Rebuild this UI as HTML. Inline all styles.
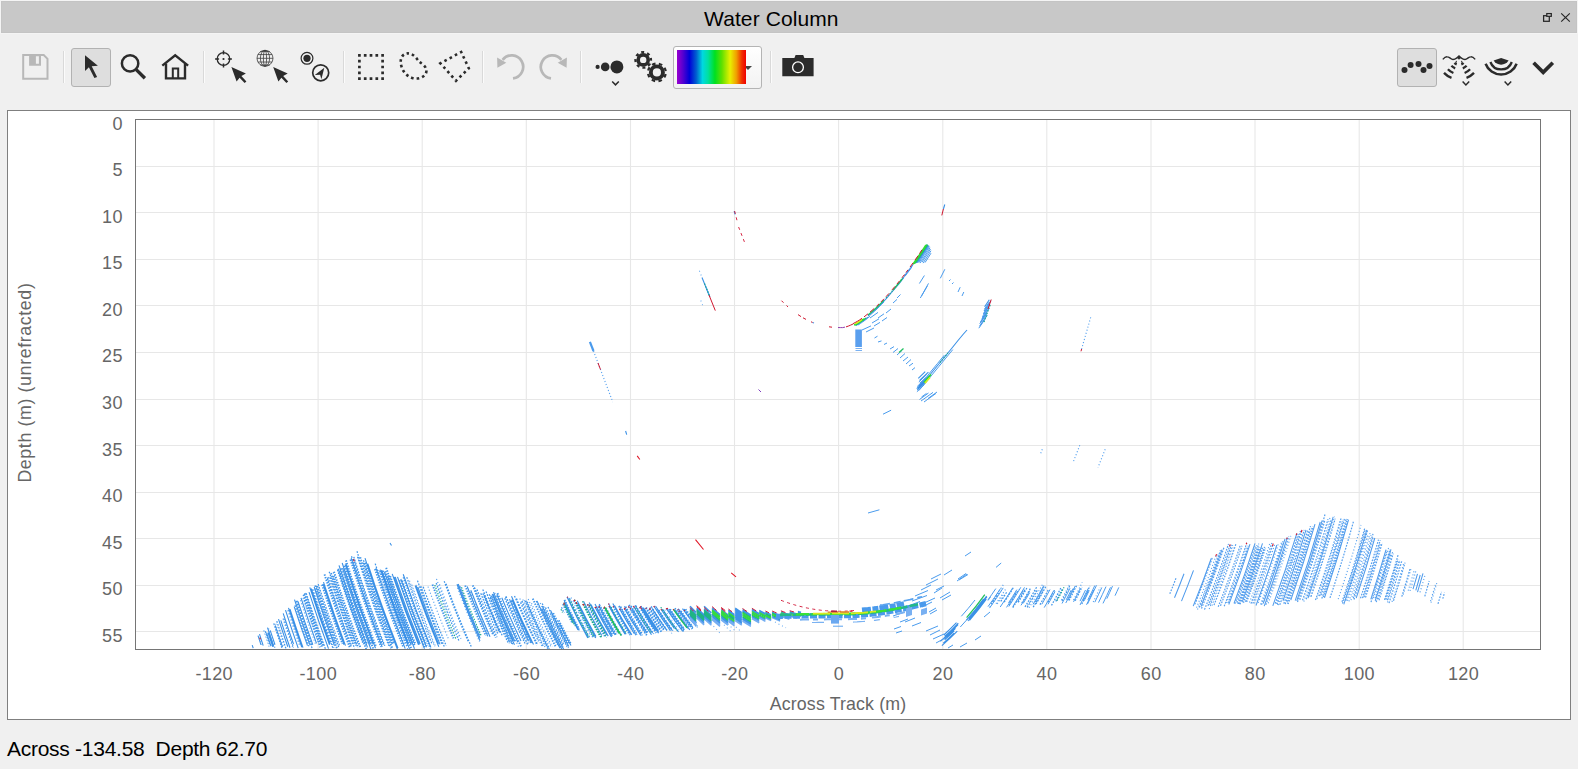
<!DOCTYPE html>
<html lang="en">
<head>
<meta charset="utf-8">
<title>Water Column</title>
<style>
html,body{margin:0;padding:0;}
body{width:1578px;height:769px;overflow:hidden;background:#f0f0f0;font-family:"Liberation Sans",sans-serif;position:relative;}
.titlebar{position:absolute;left:1px;top:1px;width:1576px;height:32px;background:#c8c8c8;box-sizing:border-box;border:1px solid #c4c4c4;box-shadow:0 0 0 1px #f4f4f4;}
.titlebar .title{position:absolute;left:702px;top:0px;height:32px;line-height:33px;font-size:21px;color:#000;letter-spacing:0.1px;white-space:nowrap;}
.titlebar svg{position:absolute;left:0;top:0;}
.toolbar{position:absolute;left:0;top:34px;width:1578px;height:70px;}
.toolbar svg{position:absolute;left:0;top:0;}
.btn-on{position:absolute;box-sizing:border-box;border:1px solid #b2b2b2;background:#dedede;border-radius:3px;}
.sep{position:absolute;width:1px;background:#d9d9d9;top:17px;height:32px;box-shadow:1px 0 0 #fbfbfb;}
.combo{position:absolute;left:673px;top:12px;width:89px;height:43px;box-sizing:border-box;border:1px solid #b4b4b4;border-radius:3px;background:linear-gradient(#ffffff,#f2f2f2);}
.combo .ramp{position:absolute;z-index:2;left:3px;top:3px;width:69px;height:34px;background:linear-gradient(90deg,#9a00d0 0%,#5a00d0 8%,#0000d8 18%,#0060d0 28%,#00d8e0 37%,#00e0a0 45%,#00e020 55%,#60e000 65%,#e8f000 77%,#f0a000 86%,#f03000 94%,#f00000 100%);}
.combo .arr{position:absolute;left:70px;top:18.5px;width:0;height:0;border-left:4px solid transparent;border-right:4px solid transparent;border-top:4px solid #444;}
.plot{position:absolute;left:7px;top:110px;width:1564px;height:610px;box-sizing:border-box;border:1px solid #7f7f7f;background:#fff;}
.plot svg{position:absolute;left:-8px;top:-111px;}
.status{position:absolute;left:7px;top:734.7px;font-size:21px;line-height:28px;color:#000;white-space:pre;letter-spacing:-0.27px;}
</style>
</head>
<body>
<div class="titlebar">
  <div class="title">Water Column</div>
</div>
<svg class="tbicons" style="position:absolute;left:0;top:0" width="1578" height="34" viewBox="0 0 1578 34">
  <g fill="none" stroke="#262626" stroke-width="1.25">
    <rect x="1543.6" y="15.7" width="5.7" height="5.6"/>
    <rect x="1546.8" y="13.6" width="4.5" height="2.7" fill="#dadada"/>
    <path d="M1561.2 13.4L1569.8 21.6M1569.8 13.4L1561.2 21.6" stroke-width="1.2"/>
  </g>
</svg>
<div class="toolbar">
  <div class="btn-on" style="left:71px;top:14px;width:40px;height:39px"></div>
  <div class="btn-on" style="left:1397px;top:14px;width:40px;height:39px"></div>
  <div class="sep" style="left:63px"></div>
  <div class="sep" style="left:203px"></div>
  <div class="sep" style="left:343px"></div>
  <div class="sep" style="left:482px"></div>
  <div class="sep" style="left:580px"></div>
  <div class="sep" style="left:770px"></div>
  <div class="combo"><div class="ramp"></div><div class="arr"></div></div>
  <svg width="1578" height="70" viewBox="0 34 1578 70">
    <!-- save (disabled) -->
    <g fill="none" stroke="#b8b8b8" stroke-width="2">
      <path d="M23.2 55H43.7L47.5 58.8V78.7H23.2Z"/>
      <path d="M29.1 55.4V65.7H41V55.4Z M35.9 56.2V63.7H38.9V56.2Z" fill="#b8b8b8" fill-rule="evenodd" stroke="none"/>
    </g>
    <!-- select arrow -->
    <path d="M85 55.2L85 70.9L88.9 67.3L94.4 78L97.1 77L91.7 66.2L97.9 65.7Z" fill="#2b2b2b"/>
    <!-- magnifier -->
    <g fill="none" stroke="#2b2b2b">
      <circle cx="130.1" cy="63.4" r="8.2" stroke-width="2.5"/>
      <path d="M136.2 69.6L144.9 78.2" stroke-width="3.4"/>
    </g>
    <!-- home -->
    <g fill="none" stroke="#2b2b2b" stroke-width="2.4">
      <path d="M162.3 65.6L175.2 55.4L188.1 65.6"/>
      <path d="M166 63.5V78.4H185V63.5"/>
      <path d="M172.8 78.4V68.6H178.2V78.4" stroke-width="2"/>
    </g>
    <!-- crosshair + arrow -->
    <g fill="none" stroke="#2b2b2b" stroke-width="1.3">
      <circle cx="223.5" cy="59" r="6.3"/>
      <path d="M223.5 50.6V54.6M223.5 63.4V67.4M215.1 59H219.1M227.9 59H231.9" stroke-width="1.5"/>
      <circle cx="223.5" cy="59" r="1.1" fill="#2b2b2b" stroke="none"/>
    </g>
    <path id="arw" d="M231.4 67L245.9 73.4L241.4 76L246.4 81.4L244.6 83L239.6 77.7L236.6 81.6Z" fill="#2b2b2b"/>
    <!-- globe + arrow -->
    <g fill="none" stroke="#333" stroke-width="0.75">
      <circle cx="265" cy="58.3" r="8"/>
      <ellipse cx="265" cy="58.3" rx="4.6" ry="8"/>
      <ellipse cx="265" cy="58.3" rx="1.6" ry="8"/>
      <path d="M257 58.3H273M257.9 54.6H272.1M257.9 62H272.1M260.2 51.6H269.8M260.2 65H269.8"/>
    </g>
    <path d="M273.2 67L287.7 73.4L283.2 76L288.2 81.4L286.4 83L281.4 77.7L278.4 81.6Z" fill="#2b2b2b"/>
    <!-- radio + compass -->
    <circle cx="307" cy="58.3" r="5.9" fill="none" stroke="#2b2b2b" stroke-width="1.2"/>
    <circle cx="307" cy="58.3" r="3.6" fill="#2b2b2b"/>
    <circle cx="320.7" cy="72.8" r="8" fill="none" stroke="#2b2b2b" stroke-width="1.7"/>
    <path d="M324.3 67.8L314.8 75.1L320.1 74.8L321.4 79.2Z" fill="#2b2b2b"/>
    <!-- dotted rect -->
    <rect x="359.4" y="55.4" width="23.2" height="23.2" fill="none" stroke="#2b2b2b" stroke-width="2.7" stroke-dasharray="2.7 3.1" stroke-dashoffset="1.35"/>
    <!-- dotted blob -->
    <path d="M408 53.4C402.5 53.6 400.3 58 400.8 63C401.3 69 405 75.5 412.2 78C418 79.6 424.5 77.5 426.2 72.5C427.5 67 422.5 64.3 419.5 61.8C416.5 59 414 53.5 408 53.4Z" fill="none" stroke="#2b2b2b" stroke-width="2.6" stroke-dasharray="2.6 3.0016" stroke-dashoffset="1.3"/>
    <!-- dotted polygon -->
    <path d="M461.2 52L468.8 68.3L456 80.8L440.4 63.3Z" fill="none" stroke="#2b2b2b" stroke-width="2.6" stroke-dasharray="2.6 3.328" stroke-dashoffset="1.3"/>
    <!-- undo / redo (disabled) -->
    <g fill="none" stroke="#b8b8b8" stroke-width="2.7">
      <path d="M502.6 59.8A11.5 11.5 0 1 1 513 78.3"/>
      <path d="M561.4 59.8A11.5 11.5 0 1 0 551 78.3"/>
    </g>
    <path d="M497.1 57.4L497.4 67.8L506.3 62.8Z M566.9 57.4L566.6 67.8L557.7 62.8Z" fill="#b8b8b8"/>
    <!-- size dots -->
    <g fill="#2b2b2b">
      <circle cx="597.6" cy="66.9" r="2.1"/>
      <circle cx="605.2" cy="66.9" r="4.3"/>
      <circle cx="616.9" cy="66.9" r="6.5"/>
    </g>
    <path d="M612.2 81.4L615.5 84.8L618.8 81.4" fill="none" stroke="#2b2b2b" stroke-width="1.5"/>
    <!-- gears -->
    <g fill="none" stroke="#2b2b2b">
      <circle cx="643.2" cy="59.9" r="5" stroke-width="3.6"/>
      <circle cx="643.2" cy="59.9" r="7.7" stroke-width="2.4" stroke-dasharray="3.00 3.048" stroke-dashoffset="-3.78"/>
      <circle cx="656.9" cy="72.4" r="6.05" stroke-width="3.9"/>
      <circle cx="656.9" cy="72.4" r="8.9" stroke-width="2.2" stroke-dasharray="3.60 3.390" stroke-dashoffset="-1.70"/>
    </g>
    <!-- camera -->
    <path d="M782.3 58H794.4L795.6 55.1H803.2L804.4 58H813.6V76.3H782.3Z" fill="#2b2b2b"/>
    <circle cx="798" cy="67.3" r="5.4" fill="none" stroke="#fff" stroke-width="1.3"/>
    <!-- points mode -->
    <g fill="#2b2b2b">
      <circle cx="1404.5" cy="70.1" r="3"/><circle cx="1410.6" cy="65.1" r="3"/><circle cx="1418.5" cy="64" r="3"/><circle cx="1423.5" cy="70.1" r="3"/><circle cx="1429.5" cy="66.1" r="3"/>
    </g>
    <!-- fan icon -->
    <g fill="none" stroke="#2b2b2b">
      <path d="M1442.8 59.4C1444.6 57.2 1446.2 56.6 1447.2 56.7C1449.600 56.8 1450.8 59.5 1453 59.5C1455 59.5 1456.4 58.2 1457.6 57.4M1460.4 57.4C1461.600 58.2 1463 59.5 1465 59.5C1467.200 59.5 1468.400 56.8 1470.8 56.7C1471.800 56.6 1473.400 57.2 1475.200 59.4" stroke-width="1.4"/>
      <path d="M1459 54.9L1461.4 57.3L1459 59.7L1456.600 57.3Z" fill="#2b2b2b" stroke="none"/>
      <path d="M1456.7 64.4A6.3 6.3 0 0 1 1454.5 62.9M1461.3 64.4A6.3 6.3 0 0 0 1463.5 62.9M1455.2 68.3A10.5 10.5 0 0 1 1451.4 65.8M1462.8 68.3A10.5 10.5 0 0 0 1466.6 65.8M1453.4 73A15.5 15.5 0 0 1 1447.9 69.3M1464.6 73A15.5 15.5 0 0 0 1470.1 69.3M1451.5 77.9A20.8 20.8 0 0 1 1444 72.9M1466.5 77.9A20.8 20.8 0 0 0 1474 72.9" stroke-width="2.35"/>
      <path d="M1456.800 60.6L1456.900 62.8L1455.200 62Z M1461.200 60.6L1461.100 62.8L1462.800 62Z" fill="#2b2b2b" stroke="none"/>
      <path d="M1462.600 81.600L1465.900 85L1469.200 81.600" stroke-width="1.5"/>
    </g>
    <!-- sonar arcs -->
    <path d="M1501.1 57.9L1493.6 60.5A8.8 8.8 0 0 0 1508.6 60.5Z" fill="#2b2b2b"/>
    <g fill="none" stroke="#2b2b2b">
      <path d="M1490.4 62A11.4 11.4 0 0 0 1511.8 62" stroke-width="2.3"/>
      <path d="M1485.6 63.7A16.5 16.5 0 0 0 1516.6 63.7" stroke-width="2.5"/>
      <path d="M1504.600 81.600L1507.900 85L1511.200 81.600" stroke-width="1.5"/>
    </g>
    <!-- big chevron -->
    <path d="M1533.600 62.7L1543.200 72.300L1552.800 62.7" fill="none" stroke="#2b2b2b" stroke-width="3.7"/>
  </svg>
</div>
<div class="plot">
<svg width="1578" height="769" viewBox="0 0 1578 769" font-family="&quot;Liberation Sans&quot;,sans-serif">
<path d="M214 120V649M318.1 120V649M422.2 120V649M526.3 120V649M630.5 120V649M734.5 120V649M838.6 120V649M942.8 120V649M1046.8 120V649M1151 120V649M1255 120V649M1359.2 120V649M1463.2 120V649M136 166.5H1540M136 212.5H1540M136 259.5H1540M136 305.5H1540M136 352.5H1540M136 399.5H1540M136 445.5H1540M136 492.5H1540M136 538.5H1540M136 585.5H1540M136 631.5H1540" fill="none" stroke="#e7e7e7" stroke-width="1.1"/>
<g class="wc-data">
<path fill="none" stroke="#6fb0f3" stroke-width="1.1" stroke-dasharray="1 3" d="M571.2 597.6A349.6 625.6 0 0 0 591.5 637M597.5 606.4A328.8 588.3 0 0 0 612.8 633.9M664.8 609.8A269.3 481.9 0 0 0 679 629.9M677.2 609.8A258.4 462.4 0 0 0 691.8 629.1M669 629.5A277.3 496.3 0 0 0 673.5 635.6M713.5 626.2A241.2 431.7 0 0 0 720.2 633.3M724 624.8A233.4 417.6 0 0 0 731.8 632.3M727.8 623.8A230.2 412 0 0 0 734.8 630.4M733 624.3A227.2 406.6 0 0 0 740.5 631M775 621.9A202.1 361.7 0 0 0 786 627.8M699.4 270.8L702 277.5M700.8 300.5L703 306"/>
<path fill="none" stroke="#5aa3ef" stroke-width="1.15" stroke-dasharray="1.1 2.1" d="M259.8 637.7A670.2 1199.3 0 0 0 262 644.5M263.8 630.4A664.4 1188.9 0 0 0 269.2 647M268.5 628.5A659.5 1180.1 0 0 0 275 648M275.8 623.7A651.4 1165.7 0 0 0 283.2 646.1M283 618.6A643.3 1151.1 0 0 0 292.8 647.6M287.8 610.3A636.5 1138.9 0 0 0 299.5 645.1M288.5 610.2A635.7 1137.6 0 0 0 300 644.3M300.5 600.2A621.8 1112.7 0 0 0 315.5 644.2M303 598A618.9 1107.4 0 0 0 320.2 648.2M313.8 589.4A606.1 1084.6 0 0 0 334.2 648.5M315.8 589.2A603.9 1080.7 0 0 0 334.5 643.5M328.2 577A587.1 1050.6 0 0 0 352 645.6M333.2 572.4A580.4 1038.7 0 0 0 358.2 644.6M378.8 570A532.8 953.5 0 0 0 407.8 649.4M388 575.3A525.1 939.7 0 0 0 413.8 645M409.5 580.7A505 903.7 0 0 0 434.8 646.8M411.8 584.8A504.2 902.2 0 0 0 435.8 647.1M428 586.6A488.3 873.8 0 0 0 448.8 639.8M436.5 578.9A476.8 853.3 0 0 0 459.8 638.4M439.5 584.3A475.8 851.4 0 0 0 461 638.8M457.5 587.8A458.8 821.1 0 0 0 479.5 641.7M470.2 591.8A447.5 800.7 0 0 0 488 634.7M494.8 592.9A423.3 757.5 0 0 0 518.8 647.3M509.5 601.6A412.2 737.6 0 0 0 529 644.5M519.8 598.6A400.7 717.1 0 0 0 542 646.4M522.8 599.6A398.2 712.6 0 0 0 545.5 648.1M524.5 600.3A396.8 710 0 0 0 545.8 645.6M528.2 599.1A392.5 702.4 0 0 0 550.8 646.6M531.5 603.3A391.2 699.9 0 0 0 552.2 646.7M540.2 603A382.4 684.3 0 0 0 562.2 647.9M1196.5 607.6A443.2 793.1 0 0 0 1216.5 554.2M1197.5 609.5A445 796.2 0 0 0 1218.5 553.4M1209.2 609A456.5 816.9 0 0 0 1232.5 545M1212 605.5A457.9 819.3 0 0 0 1233.8 545.3M1226.5 602.9A471.4 843.5 0 0 0 1246.5 546.5M1249.5 602.5A494.4 884.7 0 0 0 1269.8 543.5M1254.5 603.4A499.8 894.4 0 0 0 1274.8 544.2M1258.2 602.9A503.4 900.8 0 0 0 1278.2 544.2M1260.5 604.4A506.2 905.9 0 0 0 1282 540.9M1268.2 603.3A513.7 919.2 0 0 0 1290.8 535.8M1277.5 604.7A523.6 936.9 0 0 0 1302 529.9M1278.5 605.1A524.7 939 0 0 0 1302 533.8M1303.8 601.5A549.1 982.5 0 0 0 1330.2 517M1309.8 596.5A553.4 990.3 0 0 0 1334.5 516.7M1317 598.7A561.6 1004.9 0 0 0 1341.8 518.8M1338.2 599.1A583.4 1044 0 0 0 1361 525M1347.5 600.8A593.5 1062 0 0 0 1368.2 533.6M1349 601.4A595.2 1065.1 0 0 0 1370.5 531.5M1351 600.1A596.8 1068 0 0 0 1371 535.2M1373.2 598A617.9 1105.7 0 0 0 1388.8 547.2M1378.2 599A622.8 1114.4 0 0 0 1392.8 551.3M1387.5 602.4A632.3 1131.4 0 0 0 1400.2 560.4M1392 601.8A636.2 1138.4 0 0 0 1403.8 563M1403.2 594.7A644.5 1153.3 0 0 0 1411 568.7M1408.2 590.7A648.1 1159.7 0 0 0 1414.2 570.5M1410 590.9A649.7 1162.7 0 0 0 1416 570.6M1420 592.3A659.4 1179.9 0 0 0 1425 575.2M1430.5 601.2A671.6 1201.8 0 0 0 1435.8 583.3M1431 602.6A672.5 1203.4 0 0 0 1436.8 583M992 601.8A247.5 442.9 0 0 0 1003.2 584.9M989.8 607A248.7 445 0 0 0 1000.8 591M996 603.7A251.7 450.4 0 0 0 1006 588.5M997.2 603.8A252.7 452.2 0 0 0 1003.8 594.1M1027.5 605.4A280.1 501.3 0 0 0 1036.2 590.5M1029 607.8A282.8 506 0 0 0 1042.8 583.8M1061.5 600A308.5 552 0 0 0 1069.2 584.9M1073.5 600A319.8 572.2 0 0 0 1082.2 582.3M1093.2 602.1A339.5 607.4 0 0 0 1100.2 587.4M593.5 351L612.8 402M1090.7 317.4L1081.6 349M1079.8 445.2L1073 462.6M1105.2 449.3L1098 467.4M1042.3 449.3L1040.3 454.5"/>
<path fill="none" stroke="#559fee" stroke-width="1.2" stroke-dasharray="1.7 1.3" d="M1169.8 593.8A410.9 735.3 0 0 0 1176 578.2M1194.8 604.4A440.2 787.7 0 0 0 1212.2 557.9M1199.2 607.5A445.9 798 0 0 0 1220.5 550.2M1201.5 608.5A448.6 802.7 0 0 0 1224 547.4M1204.5 609.6A452 808.8 0 0 0 1228.5 543.9M1208 605.7A453.9 812.3 0 0 0 1230.2 544.3M1209.8 604.9A455.4 814.8 0 0 0 1231.5 544.7M1214 605.1A459.7 822.6 0 0 0 1236.2 543M1218.2 606.8A464.6 831.4 0 0 0 1240.2 545.5M1220.5 605.9A466.5 834.8 0 0 0 1242 545.8M1224.2 606.2A470.4 841.8 0 0 0 1246.8 542.7M1228 603.1A473 846.4 0 0 0 1248.2 545.8M1234.8 603.9A480.1 859 0 0 0 1255 546.2M1236.8 602.5A481.5 861.7 0 0 0 1256.8 545.2M1237.8 603.9A483.1 864.5 0 0 0 1258.8 543.6M1239 604A484.4 866.8 0 0 0 1259 546.8M1240 604.3A485.5 868.8 0 0 0 1260 547.1M1245.5 601.8A490.1 877 0 0 0 1264.5 546.9M1251 603.6A496.3 888.1 0 0 0 1271.8 543M1252.8 603.5A498.1 891.2 0 0 0 1273.2 543.6M1261.5 604.8A507.4 907.9 0 0 0 1283 541.3M1265.8 604.9A511.7 915.7 0 0 0 1288.8 536.2M1275.2 603.5A520.9 932 0 0 0 1298.2 533.8M1279.8 604.8A525.9 941 0 0 0 1304.2 529.9M1283.8 603.6A529.5 947.5 0 0 0 1307.5 530.7M1285.2 604.1A531.2 950.6 0 0 0 1310.5 526.1M1287 601.7A532.1 952.1 0 0 0 1310.2 529.9M1297.5 602A542.9 971.5 0 0 0 1325 514.5M1299.8 599.8A544.4 974.1 0 0 0 1324.8 520.5M1302.5 600.3A547.4 979.5 0 0 0 1328 519.2M1306.2 599.2A550.8 985.6 0 0 0 1331 520.2M1311 596.7A554.8 992.7 0 0 0 1335.2 518.6M1315.5 600A560.5 1003 0 0 0 1340.8 518.7M1319.5 596.1A563.2 1007.9 0 0 0 1342.8 520.9M1321 595.1A564.4 1010 0 0 0 1344.5 518.6M1321.8 598.5A566.4 1013.4 0 0 0 1346.2 519.1M1330 597.9A574.6 1028.2 0 0 0 1353.5 521.4M1342 601.9A588.2 1052.6 0 0 0 1364.8 528M1342.5 603.5A589.3 1054.5 0 0 0 1365.2 530M1345.8 600.9A591.7 1058.8 0 0 0 1367.8 529.4M1353.2 598.3A598.5 1071 0 0 0 1373 533.9M1354 599.5A599.7 1073 0 0 0 1373.2 536.9M1360.5 598.2A605.9 1084.2 0 0 0 1378.5 539.6M1362.5 598.1A607.9 1087.8 0 0 0 1380.2 540.2M1364 597.1A609.1 1089.9 0 0 0 1380.2 544.2M1365.5 597.5A610.6 1092.7 0 0 0 1382.2 542.8M1371 602.1A617.1 1104.2 0 0 0 1387 550.1M1375 598.3A619.6 1108.7 0 0 0 1390 549.1M1376.2 602.1A621.9 1112.8 0 0 0 1391.2 553.1M1379 600.2A623.8 1116.3 0 0 0 1393.2 553.5M1384.5 599.9A628.8 1125.2 0 0 0 1398.2 554.5M1385.8 599.5A629.8 1127 0 0 0 1398 559.1M1387.2 600.3A631.4 1129.9 0 0 0 1399.5 560M1389 603.1A633.8 1134.2 0 0 0 1402 560.3M1393.5 600.8A637.3 1140.4 0 0 0 1405 562.7M1401.8 596.6A643.7 1151.9 0 0 0 1410.2 568.2M1424.8 596.3A664.9 1189.9 0 0 0 1429.2 581M1438 603.8A679.3 1215.6 0 0 0 1441.5 591.9M1442.8 598.7A682.3 1221 0 0 0 1444.5 592.7"/>
<path fill="none" stroke="#4f9bec" stroke-width="1.05" d="M1174.5 597.8A417.3 746.6 0 0 0 1184 573.7M1181.5 601.1A425.6 761.6 0 0 0 1193.5 570.4M1193.2 606.1A439.3 786.2 0 0 0 1211.2 558.5M1201 606.6A447.3 800.4 0 0 0 1222 549.7M1228.8 604.5A474.3 848.7 0 0 0 1250 544.2M1234 603.4A479.1 857.4 0 0 0 1255 543.4M1242.2 601.9A486.9 871.2 0 0 0 1262.5 543.4M1256 605.5A502.1 898.5 0 0 0 1276.8 545M1263.2 603.5A508.7 910.2 0 0 0 1285 538.8M1264.2 606.1A510.7 913.8 0 0 0 1287.2 537.7M1272.8 605.9A519.2 929 0 0 0 1296.8 533.4M1283 600.7A527.7 944.2 0 0 0 1306 529.8M1290.8 600.1A535.3 958 0 0 0 1315 524.2M1295.2 600.7A540.1 966.5 0 0 0 1320.2 522M1296.8 600.9A541.7 969.4 0 0 0 1322.2 520.4M1308 598.1A552.2 988.1 0 0 0 1333.2 516.9M1324.5 597.8A568.9 1018.1 0 0 0 1348.5 519.9M1343.8 604.3A590.8 1057.2 0 0 0 1366.8 529.9M1356.2 598.2A601.5 1076.4 0 0 0 1374.8 538M1370.8 599.4A616 1102.3 0 0 0 1386 549.7M1375.2 600.9A620.6 1110.5 0 0 0 1391 549.3M1413 589.1A652 1166.7 0 0 0 1417.5 573.8M1415.8 590.3A654.9 1171.9 0 0 0 1420.2 575M1417.5 592.2A657 1175.7 0 0 0 1423 573.4"/>
<path fill="none" stroke="#559fee" stroke-width="1.8" stroke-dasharray="1.4 1.3" d="M1243.2 602.6A488.1 873.5 0 0 0 1262.8 546.4M1246.5 601.8A491.1 878.9 0 0 0 1265.2 547.7M1276.8 604A522.5 935 0 0 0 1300.8 530.9M1287.8 603.9A533.7 955 0 0 0 1312.8 526.5M1323.5 597.1A567.7 1015.8 0 0 0 1347.5 519.1"/>
<path fill="none" stroke="#4096ea" stroke-width="1.25" stroke-dasharray="1.7 1.3" d="M265.2 631.3A663.3 1186.9 0 0 0 269.5 644.2M273.8 623.4A653.2 1168.8 0 0 0 282 648.1M276.8 621.1A649.7 1162.7 0 0 0 286 648.7M283.8 618.6A642.6 1149.9 0 0 0 293.5 647.5M295 605.2A628.3 1124.3 0 0 0 309 646.3M296 600.9A626.1 1120.4 0 0 0 312.5 649.3M297 600.7A625.2 1118.7 0 0 0 312.2 645.6M304.8 593A615.8 1101.9 0 0 0 322.5 644.9M307.2 598.5A615.1 1100.7 0 0 0 323.8 646.3M306.2 593.2A614.5 1099.5 0 0 0 325.5 649.1M312.5 589.4A607.3 1086.8 0 0 0 332.8 647.8M316.2 586A602.4 1077.9 0 0 0 336 643.3M317.5 585.9A601.1 1075.6 0 0 0 339 647.9M318.2 584.1A599.7 1073.1 0 0 0 339.8 646.2M327.5 577.6A588 1052.3 0 0 0 351.2 646.1M329.8 577.2A585.6 1047.9 0 0 0 354.5 648.2M329.2 571.7A584.3 1045.6 0 0 0 354 643.6M341 568.1A571.1 1021.9 0 0 0 367.2 643.7M351.5 556.3A556.4 995.7 0 0 0 382 644.1M353.8 556.9A554.3 991.9 0 0 0 384.8 645.7M357.5 556.7A550.4 984.8 0 0 0 388.8 645.8M357 551.2A549.1 982.6 0 0 0 391 648.4M363.2 562.7A546.4 977.7 0 0 0 392.2 644.6M363.5 560.2A545.3 975.7 0 0 0 393.2 644.4M375.2 563.6A534.3 956.1 0 0 0 404.5 645M402.2 580.5A512.4 916.8 0 0 0 427 646M406.8 577.1A506.6 906.4 0 0 0 432 643.9M417.5 580.6A496.8 889.1 0 0 0 442.2 644.9M420.8 586.2A495.5 886.7 0 0 0 444.5 647.1M423.2 586.8A493.2 882.6 0 0 0 446.2 645.7M436.2 583A478.6 856.4 0 0 0 459 640.8M444.2 581.2A469.8 840.7 0 0 0 468.2 641.5M446 583.7A469 839.2 0 0 0 471.2 646.4M459.8 586.2A456 815.9 0 0 0 480 636.2M474.5 587.4A441.5 790.1 0 0 0 495.5 637.8M477 589.4A439.8 786.9 0 0 0 497 637.2M480.8 593.3A437.5 782.9 0 0 0 498 634.3M482.8 593.5A435.6 779.5 0 0 0 499.2 632.6M482.8 589.5A434 776.6 0 0 0 502.5 636.2M486 591.5A431.5 772.2 0 0 0 508 642.6M489.2 594.2A429.4 768.3 0 0 0 510 642.1M490.8 595.5A428.4 766.5 0 0 0 512.2 644.7M491.8 596.3A427.7 765.3 0 0 0 512.8 644.2M504.8 598.2A415.5 743.5 0 0 0 525 643.4M505.5 596.7A414.1 741 0 0 0 525.2 640.9M506 596.3A413.5 739.9 0 0 0 528 645.2M511.2 600.6A410 733.7 0 0 0 531 643.9M514.5 595.9A404.8 724.4 0 0 0 537 645.1M516.5 598.6A404 722.9 0 0 0 537.2 643.8M520.5 602.5A401.7 718.8 0 0 0 538.5 641.4M522 600.9A399.5 714.9 0 0 0 543.5 646.8M536.2 600.9A385.4 689.7 0 0 0 557.5 645M542.2 603.4A380.6 681.1 0 0 0 563.5 646.8M545.5 607.4A379.2 678.5 0 0 0 564 644.8M550.5 613.7A377.2 674.9 0 0 0 567.2 646.9M548 606.9A376.5 673.8 0 0 0 568.5 647.9M561.5 607.2A363.5 650.5 0 0 0 564.2 612.9M569.5 598.1A351.6 629.1 0 0 0 590 638.1M599.2 604.1A326 583.4 0 0 0 616.5 635M606 607.7A321.5 575.3 0 0 0 622.2 636.1M624.5 606.3A303.6 543.4 0 0 0 642.2 635.5M628.5 606.4A300 536.8 0 0 0 646.5 635.5M630.2 608.3A299.4 535.7 0 0 0 647 635.2M635.8 605.5A292.9 524.1 0 0 0 653.8 634M651.2 606.4A279.3 499.9 0 0 0 667 630M658.8 610A274.7 491.5 0 0 0 673 630.6M667 608.1A266.4 476.6 0 0 0 683.8 631.4M684.2 610.2A253 452.7 0 0 0 697.5 627.3M684.2 609A252.3 451.6 0 0 0 697.5 626.2M991 604A248 443.7 0 0 0 998.5 593.2M1000.8 601.3A254.2 454.8 0 0 0 1007.2 591.3M1004.2 602.1A257.5 460.8 0 0 0 1013.5 587.5M1008.8 605.2A263.3 471.2 0 0 0 1018.5 589.7M1012.8 607.6A268.2 480 0 0 0 1024 589.4M1017.8 601.6A269.2 481.8 0 0 0 1025.2 589.2M1018.2 602.3A270.1 483.3 0 0 0 1027 587.8M1021.8 603A273.6 489.6 0 0 0 1030.5 588.3M1025 606.8A278.7 498.6 0 0 0 1036.8 586.8M1027.2 607.3A280.9 502.7 0 0 0 1037.2 590.3M1033.2 607.1A286.2 512.2 0 0 0 1042.8 590.6M1036 603.9A287 513.6 0 0 0 1045.8 586.6M1040 604.6A291 520.8 0 0 0 1048.5 589.4M1048 602.2A297.1 531.6 0 0 0 1054.8 589.8M1051.5 605.4A302 540.4 0 0 0 1061 587.7M1055.8 601.4A303.8 543.7 0 0 0 1062.8 588.1M1062 600.9A309.4 553.7 0 0 0 1070.2 584.9M1069 600.5A315.8 565.1 0 0 0 1076.5 585.7M1075.2 600.7A321.7 575.7 0 0 0 1082 587.1M1083.2 599.8A328.9 588.5 0 0 0 1090 585.9M1081.8 604A329.5 589.6 0 0 0 1088.8 589.9"/>
<path fill="none" stroke="#3a90e6" stroke-width="1.1" d="M252.2 645.2A679.3 1215.5 0 0 0 253.2 648.2M258 635.6A671.2 1201.1 0 0 0 261 644.8M259.5 634.1A669.4 1197.8 0 0 0 263.2 645.6M266.5 632.7A662.6 1185.6 0 0 0 271 646.3M268 632.7A661.2 1183.1 0 0 0 272.8 646.9M267.5 627.7A660.2 1181.3 0 0 0 273.8 646.6M270.2 630.4A658.4 1178.2 0 0 0 275 644.7M275.2 625.3A652.4 1167.3 0 0 0 282.5 647M278.5 619.2A647.6 1158.8 0 0 0 287.8 646.8M280.8 620.3A645.8 1155.7 0 0 0 290 647.8M283.2 613.3A641.5 1147.9 0 0 0 293.5 644M285.5 610.2A638.5 1142.6 0 0 0 298.2 648.1M288.5 607.9A635.1 1136.4 0 0 0 301.8 647.2M290 609.2A634.1 1134.7 0 0 0 303 647.6M294.2 606.6A629.4 1126.3 0 0 0 307.5 645.6M294.5 599.6A627.1 1122.2 0 0 0 309.8 644.7M298 601.4A624.4 1117.4 0 0 0 312.8 644.8M301 597.9A620.7 1110.6 0 0 0 316.5 643.4M309 592.2A611.6 1094.5 0 0 0 328.5 648.6M309.8 587.4A609.5 1090.7 0 0 0 329.5 644.9M311.2 588.5A608.3 1088.6 0 0 0 330.2 643.8M314.2 587A604.8 1082.2 0 0 0 334.5 645.7M323 584.1A594.8 1064.4 0 0 0 344 644.7M323.5 582.1A593.6 1062.3 0 0 0 345.5 645.6M339 565.4A572.2 1024 0 0 0 367.5 647.4M342.5 568.2A569.5 1019.2 0 0 0 371 649.5M342.2 563A568.1 1016.6 0 0 0 370.5 644.5M345.2 564.3A565.4 1011.8 0 0 0 373 644M345.8 563.2A564.6 1010.3 0 0 0 375.5 648.3M351.2 558.2A557.3 997.3 0 0 0 382.2 647M365 558.2A543.1 971.8 0 0 0 397.5 649.5M367.8 563.7A542 970 0 0 0 398 648.1M376 568.1A535 957.4 0 0 0 405.2 648.6M380.5 569.6A530.9 950 0 0 0 409.5 648.9M381.8 570.1A529.8 948 0 0 0 408.5 643.7M384.5 572A527.6 944.1 0 0 0 411.2 645M387.8 576.7A525.9 941 0 0 0 414.5 648.8M392.2 573.8A520.3 931 0 0 0 418.5 644.7M394 576.9A519.5 929.7 0 0 0 419.2 644.7M395.2 576.9A518.3 927.4 0 0 0 420.2 644M397.5 576.9A516 923.3 0 0 0 424.5 648.8M400.8 579A513.4 918.6 0 0 0 426.5 647.2M403.2 574.3A509.2 911.1 0 0 0 430.8 647.2M415.2 585.9A501 896.6 0 0 0 438.8 646.7M415.8 584.9A500.1 895 0 0 0 438.5 644M417.8 586.9A498.8 892.6 0 0 0 440 644.4M457 584.3A458 819.6 0 0 0 480 640.9M458.2 584A456.6 817.1 0 0 0 480.2 638.3M467.2 586.5A448.5 802.5 0 0 0 487.8 636.4M470.8 590.2A446.4 798.8 0 0 0 490 636.7M484 594.9A434.9 778.2 0 0 0 499.8 632.2M492.2 594A426.3 762.8 0 0 0 514.5 644.8M493 594.1A425.6 761.5 0 0 0 513.5 641.2M493.5 592.1A424.2 759.1 0 0 0 515 641.5M496.8 594.5A422 755.1 0 0 0 517.8 642.3M501.8 597.7A418.3 748.5 0 0 0 521 641.1M509.5 599.1A411.1 735.7 0 0 0 528.5 641.2M511.8 599.6A409.1 732.1 0 0 0 531.5 643M511.5 596.2A407.9 730 0 0 0 533.5 644.6M537 600.9A384.7 688.3 0 0 0 560 648.3M541.8 608.5A383.4 686 0 0 0 562 649.4M542.2 605.9A381.7 683.1 0 0 0 563.8 649.4M550.5 610.2A375.6 672.2 0 0 0 568.8 646.5M559.2 622.9A373 667.5 0 0 0 571 645.6M564.2 602.4A358.7 641.8 0 0 0 578 630M564.2 600.5A357.8 640.3 0 0 0 579.2 630.6M567 597.1A353.6 632.7 0 0 0 587.8 638M567.2 596.7A353.1 631.9 0 0 0 588 637.5M577.5 603.2A346.2 619.6 0 0 0 595.8 638M577.2 600.7A345.3 617.9 0 0 0 596 636.6M583.5 601.2A339.6 607.6 0 0 0 601.8 635.6M589.2 602.5A334.7 598.9 0 0 0 607 635.3M591 604.4A334 597.6 0 0 0 608.2 636.1M595 607.1A331.5 593.2 0 0 0 611.5 636.9M595 603.9A330 590.4 0 0 0 612 634.9M599 606.2A327.3 585.7 0 0 0 614.8 634.5M609 606.3A318 569 0 0 0 625 634.2M608.5 603.6A317.1 567.4 0 0 0 626 634.2M612.8 603.5A313.1 560.2 0 0 0 630.5 634.1M614.5 605.5A312.5 559.1 0 0 0 631.8 634.9M619.5 608.8A309.5 553.9 0 0 0 634.5 634M624.2 608.3A304.9 545.6 0 0 0 640.8 635.5M631.8 608.3A298 533.3 0 0 0 647 632.9M633.5 606.1A295.3 528.4 0 0 0 651.5 634.8M635 605.2A293.4 525.1 0 0 0 652.5 633.1M641 608.3A289.6 518.2 0 0 0 655.5 630.9M641 606.2A288.5 516.2 0 0 0 658.5 633.3M642.8 607.8A287.8 515 0 0 0 658.8 632.5M643.5 607.8A287.1 513.7 0 0 0 658.5 631M652 608.4A279.8 500.6 0 0 0 667 630.8M653.8 606A276.9 495.4 0 0 0 670.5 630.8M655.5 606A275.3 492.7 0 0 0 672 630.3M661 609.2A272.3 487.2 0 0 0 674.5 628.7M662.5 609.1A270.9 484.7 0 0 0 678.5 631.8M666.2 608.4A267.2 478.1 0 0 0 682.8 631.4M670.2 610.5A264.9 474.1 0 0 0 684 629.5M674.2 609.9A261.1 467.2 0 0 0 688 628.5M675 610.1A260.5 466.2 0 0 0 689.8 629.9M679 609.5A256.7 459.4 0 0 0 693 628M682.5 608.6A253.4 453.5 0 0 0 696.2 626.5M625.6 431L626.7 434.7M390 543L391.5 545.5M943.8 635A234.1 418.9 0 0 0 956.5 622.7M944.6 636.5A235.6 421.5 0 0 0 958.3 623.1M940.4 641.3A236.3 422.9 0 0 0 958.1 624.5M944.9 638.5A237.1 424.2 0 0 0 955.5 628.3M944.6 639.9A237.8 425.5 0 0 0 954.2 630.8M943.3 643.2A239.3 428.2 0 0 0 954.1 633.2M966.4 620.2A239.3 428.2 0 0 0 983.6 598.8M941.9 645.6A240.1 429.6 0 0 0 957.3 631.2M968.9 618.6A240.1 429.6 0 0 0 986.6 596.1M967.9 621A240.8 430.9 0 0 0 987 596.8M969.5 620.4A241.6 432.3 0 0 0 986.3 599.1M812.5 322.4L814 323M856 325.4L858.4 324L860.8 322.4L863.2 320.7L865.6 319L868 317.1M868 316L870.6 313.8L873.1 311.6L875.7 309.2L878.3 306.8L880.9 304.2L883.4 301.6L886 298.9M886 298.8L888.6 295.9L891.1 293L893.7 290L896.3 287L898.9 283.8L901.4 280.6L904 277.2M904 276.6L906.2 273.7L908.5 270.7L910.8 267.6L913 264.4M916 263L918.4 259.5L920.8 255.9L923.2 252.3L925.6 248.7L928 244.9M917 262.7L919.3 259.4L921.6 255.9L923.9 252.5L926.2 248.9L928.5 245.4M918 389L925 381L931 373.5L938 365L945 356.5L952 348L958 340.5L963 334.5L967 330M917.2 390.2L925.7 382.1M916.7 388.6L927.3 378.5M918.7 385.6L929.3 375.5M919.9 383.3L925.9 377.6M919.6 380.5L928.4 372.1M918.3 378.3L925.2 371.7M979.6 326.3L987.3 315M980.4 322.4L986.4 313.6M981.9 318.9L989.2 308.3M983.3 314.2L989.5 305.1M984 311L991 300.8M984.6 306.7L989.3 299.8M702 277.5L709 295M734.2 211L735 214.5M944.8 204.5L943.4 209"/>
<path fill="none" stroke="#3f95ea" stroke-width="1.9" stroke-dasharray="1.4 1.3" d="M304.5 600A618.1 1106 0 0 0 320.2 645.8M303.5 594.7A617.4 1104.8 0 0 0 321.2 646.5M304.2 594.1A616.6 1103.3 0 0 0 322.2 646.6M315.2 585.5A603.3 1079.5 0 0 0 337.2 649M322 584.6A596 1066.5 0 0 0 342.5 643.8M324.5 574.4A590.1 1055.9 0 0 0 350 648.2M327.2 578.9A588.7 1053.5 0 0 0 351 647.2M331 573.1A583 1043.2 0 0 0 356 645.3M333.2 576.1A581.7 1040.8 0 0 0 358.2 647.7M334 571.7A579.4 1036.8 0 0 0 360.5 647.8M337.8 569.9A575 1028.9 0 0 0 363.5 644.1M338.2 568.8A574.1 1027.4 0 0 0 366.2 649M339.8 570.4A573.1 1025.5 0 0 0 365.8 645M344.2 565.7A566.9 1014.5 0 0 0 373.2 648.5M346 560.4A563.4 1008.2 0 0 0 375.8 646M350.5 559.5A558.5 999.4 0 0 0 381 646.8M353.5 559.2A555.3 993.6 0 0 0 383.8 645.6M360.2 557.3A547.7 980.1 0 0 0 392.2 648M365.2 562.6A544.3 974 0 0 0 393.8 643.1M375 569A536.4 959.8 0 0 0 403 646.4M380 571A531.9 951.8 0 0 0 407.5 646.4M382.8 570.8A529 946.6 0 0 0 411.2 648.5M385.2 571.2A526.6 942.2 0 0 0 411.8 643.7M386.2 567.8A524.4 938.4 0 0 0 415 646.3M390.2 576.1A523.1 936.1 0 0 0 415.5 644.3M399.5 580.3A515.1 921.7 0 0 0 424.8 647.2M403.5 577.2A509.9 912.4 0 0 0 430.5 648.5M432.5 584.5A483 864.2 0 0 0 453.5 638.3M465.2 585.5A450.1 805.5 0 0 0 485.8 635.7M472.8 585.3A442.5 791.8 0 0 0 493 634.4M490 598A430.1 769.7 0 0 0 509.8 643.2M497.5 593.2A420.7 752.8 0 0 0 521 646.3M525.5 600.9A396 708.7 0 0 0 548 648.5M527 601.9A395 706.8 0 0 0 549.2 648.7M532.8 598.6A387.9 694.1 0 0 0 556 647.2M553.2 613.1A374.2 669.7 0 0 0 568.8 643.8M558.8 620.4A372.3 666.3 0 0 0 571 644.2M563 604A360.6 645.3 0 0 0 572 622.4M564.5 599.8A357.2 639.2 0 0 0 579.2 629.4M574 600A348.1 622.9 0 0 0 593.2 637.1M587.5 604.2A337.2 603.4 0 0 0 604.8 636.2M595.8 606.9A330.7 591.7 0 0 0 612 636.2M598.5 606.6A328 586.9 0 0 0 614.2 634.9M599.2 605.2A326.6 584.4 0 0 0 616.2 635.7M603.8 607.6A323.5 578.9 0 0 0 618.5 633.7M613.2 606.3A314 562 0 0 0 630 635M619 606A308.6 552.1 0 0 0 636.2 635M620.5 606.8A307.6 550.4 0 0 0 637.2 634.8M624.8 607.7A304.1 544.2 0 0 0 640.8 634.1M625.5 606.7A302.9 542.1 0 0 0 642.5 634.6M629 604.9A298.8 534.6 0 0 0 646.2 633M631 606.1A297.5 532.4 0 0 0 647.8 633.1M639.8 607.1A290.1 519.2 0 0 0 656.2 632.9M640.5 606.3A289 517.2 0 0 0 656.2 631M645.8 608A285.2 510.4 0 0 0 661.8 632.4M646 607.4A284.6 509.4 0 0 0 660.8 630.1M649.5 608.8A282.3 505.1 0 0 0 663.5 630M649.8 607.8A281.5 503.7 0 0 0 663.8 629.1M656.8 609.2A276 493.9 0 0 0 670 628.7M668.8 609.2A265.5 475 0 0 0 684.5 630.9M670 609.3A264.4 473.2 0 0 0 684.5 629.3M674.8 608.4A259.8 464.8 0 0 0 689 627.7M678.8 610.7A257.7 461.2 0 0 0 692.5 628.9M678 609A257.3 460.4 0 0 0 690.8 626.1M680.8 611.1A256.2 458.5 0 0 0 692.5 626.6M685.5 609.3A251.5 450.1 0 0 0 697 624.2"/>
<path fill="none" stroke="#4a9aec" stroke-width="2.2" d="M589.9 341.9L593.5 351"/>
<path fill="none" stroke="#4a9cee" stroke-width="1" d="M988 599.8A243.3 435.3 0 0 0 995.8 588.6M988 600.5A243.7 436 0 0 0 990.5 597M988 606.6A247.1 442.2 0 0 0 1000.5 588.5M989.5 608.1A249.1 445.7 0 0 0 1003.2 587.9M1000.2 607A256.9 459.8 0 0 0 1012.8 587.7M1008.5 602.9A261.7 468.3 0 0 0 1016.8 589.7M1006.5 607.4A262.6 469.9 0 0 0 1016.5 591.8M1008.8 606.5A264 472.5 0 0 0 1020.8 587.3M1012.8 606.5A267.6 478.8 0 0 0 1024.5 587.4M1021 605.3A274.2 490.7 0 0 0 1029.8 590.7M1023.2 603.4A275.2 492.4 0 0 0 1029.8 592.5M1033 604.4A284.5 509.2 0 0 0 1043.8 585.5M1035 602.3A285.2 510.4 0 0 0 1044 586.3M1041.8 604.3A292.4 523.3 0 0 0 1050 589.5M1044.2 607.6A296.5 530.5 0 0 0 1053.8 590.5M1048 604.3A298.2 533.6 0 0 0 1055 591.6M1062 603.5A310.7 556.1 0 0 0 1070 588.2M1066.2 599.8A312.8 559.8 0 0 0 1071.2 590.1M1065.8 603A314 561.8 0 0 0 1073.2 588.4M1068 600.3A314.7 563.2 0 0 0 1075.2 586M1073.5 601.9A320.7 573.8 0 0 0 1080.5 588M1080 601.1A326.4 584.1 0 0 0 1085.5 590M1080 605A328.3 587.5 0 0 0 1088.2 588.4M1084.2 600.7A330.2 591 0 0 0 1089.2 590.5M1087.8 600.1A333.3 596.4 0 0 0 1094.8 585.5M1086.5 604.8A334.3 598.3 0 0 0 1093.8 589.9M1087.5 604A334.9 599.3 0 0 0 1096.5 585.3M1094.8 602.2A340.9 610.1 0 0 0 1101.8 587.5M1098.5 602.6A344.7 616.8 0 0 0 1106 586.6M1103 603.4A349.4 625.1 0 0 0 1110.5 587.3M1106.8 598.7A350.8 627.7 0 0 0 1112.5 586.1M1115 595.7A357.5 639.8 0 0 0 1118.8 587.4M961.3 616.3A233.3 417.6 0 0 0 975 600M960.3 627A239.3 428.2 0 0 0 972.2 613.4M894 629L901 626.5M900 622L908 619M893 616L905 612M903 611L914 607M908 606L920 601.5M912 601L927 595.5M915 596L928 590.5M921 590L931 585M926 585L938 579M931 579L941 574M944 575L952 570M957 581L967 574M958 579L966 573.5M959 580L968 574.5M965 556L971 552M996 567.4L1001.2 563M868 513L879.4 509.8M883 414.2L891.1 410.2M926 631L938 626M930 635L940 630M933 639L944 634M936 643L947 637M929 612L936 608M930 614L937 610M934 593L942 588M936 590L944 586M905 622L915 618M912 626L921 622.5M896 633L902 631M948 648L953 645M960 647L967 643M975 640L981 636M984 617L990 612M922 607L932 602M924 603L935 598M940 598L950 592M942 600L951 595M858 325L860.4 323.5L862.8 321.8L865.2 320.1L867.6 318.2L870 316.2M870 315.2L872.3 313.2L874.7 311.1L877 308.9L879.3 306.7L881.7 304.3L884 301.9M905 276.3L907.3 273.2L909.7 270.1L912 266.8M918 262.6L920.8 258.5L923.5 254.4L926.2 250.2L929 245.9M919 262.6L921.6 258.7L924.2 254.7L926.9 250.7L929.5 246.6M920 263.1L922.5 259.4L925 255.6L927.5 251.7L930 247.8M922 262.1L924.8 257.8L927.7 253.5L930.5 249M923 263.1L925.7 259.1L928.3 254.9L931 250.7M925 262.6L928 257.9L931 253.2M862 330L871 325.9M866 332L874 328M872 323L879 318.8M874 326L880 322.4M878 318L884 313.8M882 321L887 317.5M870 318L878 312.4M886 313L891 309M893 303L897 299.4M897 298L900.5 294.5M918.8 390.6L925.8 382.6L931.8 375.1L938.8 366.6L945.8 358.1L952.8 349.6M924.4 379.6L930.4 372.1L937.4 363.6L944.4 355.1M916.9 391.8L924.3 384.7M917.1 386.6L927.7 376.5M918.8 382L926.8 374.4M919.5 399.5L928.5 393M921 401L933 392.4M924 402L936 393.4M928 398.5L937 392M921.5 397L926.5 393.4M978.8 328.2L984.8 319.6M979.7 323.8L986.8 313.5M981.4 320.5L987 312.4M982.3 316.8L987.4 309.3M983.7 313.2L989.8 304.3M984.4 309.1L989.4 301.9M706 287L710 297M874.5 338L877.5 336.2M878 342L881.5 340.9M884 344.5L887 343M890 349L894 346.6M893 352.5L898 348.5M897 355L902 350.5M900 358L905 353.5M903 361L908 357M906 364L911 359.5M909 366L913 363.2M912 370L915 367.6M919.4 283.5L924.4 275.5M920.3 298L927.3 286.1M921.5 296L928.5 283.4M940.3 278.3L944.8 269.3M949 281L950.5 279.5M952 284L953.5 282.5M958 292L960.2 287.2M962 296L963.8 292"/>
<path fill="none" stroke="#74aef2" stroke-width="1.5" d="M690 617A301.5 539.5 0 0 0 696.1 623M690 618.2A302.1 540.5 0 0 0 696.1 624.2M690 619.4A302.7 541.6 0 0 0 696.1 625.4M696.7 616.8A298.2 533.6 0 0 0 704.1 623.8M696.7 618A298.7 534.6 0 0 0 704.1 624.9M704.1 617.6A295.1 528 0 0 0 711.4 624.1M704.1 618.7A295.6 529 0 0 0 711.4 625.2M712.1 617.5A291.5 521.6 0 0 0 720 624.1M712.1 618.7A292.1 522.7 0 0 0 720 625.3M712.1 619.8A292.7 523.7 0 0 0 720 626.4M721.2 618.7A288.2 515.8 0 0 0 728 623.9M721.2 619.8A288.8 516.9 0 0 0 728 625.1M728.4 619.2A285.7 511.2 0 0 0 734.4 623.6M728.4 620.3A286.2 512.2 0 0 0 734.4 624.7M728.4 621.5A286.8 513.3 0 0 0 734.4 625.8M735.2 619.5A283.3 506.9 0 0 0 741.8 624M735.2 620.6A283.8 507.9 0 0 0 741.8 625.1M742.5 619.9A280.9 502.7 0 0 0 750.9 625.2M742.5 621.1A281.5 503.8 0 0 0 750.9 626.4M751.9 617.4A276.5 494.8 0 0 0 759.2 621.6M751.9 618.6A277.1 495.9 0 0 0 759.2 622.8M759.3 617A274.1 490.4 0 0 0 765.4 620.2M759.3 618.2A274.7 491.5 0 0 0 765.4 621.3M765.4 617.8A272.7 488.1 0 0 0 771.2 620.5M772.1 617.6A271 484.9 0 0 0 780.1 621.1M780.9 615.2A267.6 478.8 0 0 0 789.4 618.3M780.9 616.3A268.2 479.9 0 0 0 789.4 619.4M789.7 616.1A266.3 476.6 0 0 0 796.9 618.3M797.9 615.8A264.8 473.8 0 0 0 801 616.6"/>
<path fill="none" stroke="#3f93e8" stroke-width="1.5" d="M690 606.3A296.3 530.2 0 0 0 696.1 612.4M690 608.6A297.4 532.2 0 0 0 696.1 614.7M690 615.8A300.9 538.4 0 0 0 696.1 621.8M696.7 607.8A293.7 525.6 0 0 0 704.1 614.8M696.7 608.9A294.3 526.6 0 0 0 704.1 615.9M696.7 614.5A297 531.5 0 0 0 704.1 621.5M696.7 615.7A297.6 532.5 0 0 0 704.1 622.6M704.1 606.2A289.4 517.9 0 0 0 711.4 612.9M704.1 608.7A290.7 520.2 0 0 0 711.4 615.3M704.1 615.4A294 526.1 0 0 0 711.4 621.9M704.1 616.5A294.5 527 0 0 0 711.4 623M712.1 607.7A286.6 512.8 0 0 0 720 614.5M712.1 608.9A287.2 513.9 0 0 0 720 615.7M712.1 615A290.2 519.3 0 0 0 720 621.6M712.1 616.2A290.9 520.5 0 0 0 720 622.9M721.2 609.5A283.6 507.4 0 0 0 728 614.9M721.2 616.3A287 513.6 0 0 0 728 621.6M721.2 617.5A287.6 514.7 0 0 0 728 622.7M728.4 610.2A281 502.9 0 0 0 734.4 614.7M728.4 611.4A281.7 504 0 0 0 734.4 615.9M728.4 618.1A285.1 510.1 0 0 0 734.4 622.5M735.2 608A277.3 496.2 0 0 0 741.8 612.6M735.2 609.1A277.9 497.2 0 0 0 741.8 613.7M735.2 610.2A278.4 498.3 0 0 0 741.8 614.8M735.2 611.3A279 499.3 0 0 0 741.8 615.9M735.2 612.5A279.6 500.4 0 0 0 741.8 617M735.2 613.7A280.2 501.4 0 0 0 741.8 618.2M735.2 614.8A280.8 502.5 0 0 0 741.8 619.4M735.2 616A281.5 503.7 0 0 0 741.8 620.5M735.2 617.2A282.1 504.8 0 0 0 741.8 621.7M735.2 618.5A282.7 505.9 0 0 0 741.8 623M742.5 609.7A275.6 493.1 0 0 0 750.9 615.1M742.5 610.9A276.2 494.2 0 0 0 750.9 616.2M742.5 617.6A279.7 500.5 0 0 0 750.9 622.9M742.5 618.8A280.3 501.6 0 0 0 750.9 624M751.9 609.5A272.3 487.2 0 0 0 759.2 613.7M751.9 610.7A272.9 488.4 0 0 0 759.2 614.8M751.9 616.3A275.9 493.7 0 0 0 759.2 620.4M759.3 610.4A270.5 484 0 0 0 765.4 613.6M759.3 611.5A271.1 485.1 0 0 0 765.4 614.7M759.3 616A273.5 489.4 0 0 0 765.4 619.1M765.4 612.2A269.7 482.6 0 0 0 771.2 614.9M765.4 616.6A272.1 486.9 0 0 0 771.2 619.4M772.1 612.1A267.9 479.4 0 0 0 780.1 615.5M772.1 616.6A270.4 483.8 0 0 0 780.1 620M780.9 611.9A265.8 475.6 0 0 0 789.4 615M789.7 611.7A263.9 472.3 0 0 0 796.9 614M789.7 615.1A265.8 475.6 0 0 0 796.9 617.3M797.9 611.5A262.4 469.6 0 0 0 801 612.3M797.9 612.6A263 470.6 0 0 0 801 613.4"/>
<path fill="none" stroke="#1fb484" stroke-width="1.5" d="M690 609.8A298 533.2 0 0 0 696.1 615.9M690 611A298.6 534.3 0 0 0 696.1 617M690 612.2A299.1 535.3 0 0 0 696.1 618.2M690 613.4A299.7 536.3 0 0 0 696.1 619.4M690 614.6A300.3 537.4 0 0 0 696.1 620.6M696.7 610A294.8 527.5 0 0 0 704.1 617M696.7 611.1A295.4 528.5 0 0 0 704.1 618.1M696.7 612.2A295.9 529.5 0 0 0 704.1 619.3M696.7 613.4A296.5 530.5 0 0 0 704.1 620.4M704.1 610A291.3 521.3 0 0 0 711.4 616.6M704.1 611.1A291.8 522.2 0 0 0 711.4 617.6M704.1 612.1A292.4 523.2 0 0 0 711.4 618.7M704.1 613.2A292.9 524.1 0 0 0 711.4 619.7M704.1 614.3A293.4 525.1 0 0 0 711.4 620.8M712.1 613.7A289.6 518.2 0 0 0 720 620.4M721.2 611.8A284.7 509.5 0 0 0 728 617.1M721.2 615.2A286.4 512.6 0 0 0 728 620.4M728.4 613.7A282.8 506.1 0 0 0 734.4 618.1M728.4 614.8A283.4 507.1 0 0 0 734.4 619.2M728.4 615.9A283.9 508.1 0 0 0 734.4 620.3M742.5 612.1A276.8 495.3 0 0 0 750.9 617.4M742.5 614.3A277.9 497.4 0 0 0 750.9 619.6M742.5 616.5A279.1 499.4 0 0 0 750.9 621.8M751.9 612.8A274.1 490.4 0 0 0 759.2 617M751.9 615.1A275.3 492.6 0 0 0 759.2 619.2M759.3 613.7A272.3 487.2 0 0 0 765.4 616.9M765.4 613.3A270.3 483.8 0 0 0 771.2 616.1M765.4 614.4A270.9 484.8 0 0 0 771.2 617.1M772.1 613.2A268.6 480.6 0 0 0 780.1 616.7M772.1 615.4A269.7 482.7 0 0 0 780.1 618.9M780.9 614.1A267 477.8 0 0 0 789.4 617.2M789.7 612.9A264.5 473.4 0 0 0 796.9 615.1M797.9 614.8A264.2 472.8 0 0 0 801 615.6"/>
<path fill="none" stroke="#34dc3c" stroke-width="1.5" d="M712.1 610.1A287.8 515 0 0 0 720 616.8M712.1 611.3A288.4 516 0 0 0 720 618M712.1 612.5A289 517.1 0 0 0 720 619.2M721.2 610.6A284.1 508.4 0 0 0 728 616M721.2 612.9A285.3 510.5 0 0 0 728 618.2M721.2 614A285.9 511.5 0 0 0 728 619.3M728.4 612.7A282.3 505.1 0 0 0 734.4 617.1M728.4 617A284.5 509.1 0 0 0 734.4 621.4M742.5 613.2A277.4 496.3 0 0 0 750.9 618.5M742.5 615.4A278.5 498.4 0 0 0 750.9 620.7M751.9 611.7A273.5 489.4 0 0 0 759.2 615.9M751.9 614A274.7 491.5 0 0 0 759.2 618.1M759.3 612.6A271.7 486.1 0 0 0 765.4 615.8M759.3 614.9A272.9 488.4 0 0 0 765.4 618.1M765.4 615.5A271.5 485.8 0 0 0 771.2 618.2M772.1 614.3A269.1 481.6 0 0 0 780.1 617.7M780.9 613A266.4 476.7 0 0 0 789.4 616.1M789.7 614A265.2 474.5 0 0 0 796.9 616.2M797.9 613.7A263.6 471.7 0 0 0 801 614.5"/>
<path fill="none" stroke="#18a890" stroke-width="1.2" stroke-dasharray="1.4 1.4" d="M434.8 585A480.9 860.5 0 0 0 456 639.2M461.5 587.3A454.6 813.5 0 0 0 481.2 635.8M561 609.3A365 653.1 0 0 0 562.5 612.4M563.8 604.2A360 644.1 0 0 0 573.8 624.5M563.8 602.7A359.3 642.9 0 0 0 575.2 626M569.5 599.4A352.2 630.2 0 0 0 589 637.5M574.5 599.8A347.5 621.9 0 0 0 593.8 636.9M576.2 602.3A347 620.9 0 0 0 594.5 637.2M582.8 603.9A341.5 611.2 0 0 0 600.8 637.6M583.5 604.2A341 610.2 0 0 0 599.8 634.8M582.5 601.2A340.5 609.4 0 0 0 602 637.9M589 605.5A336.4 602 0 0 0 606.5 637.7M589.5 604.8A335.6 600.5 0 0 0 605.8 634.8M611 607A316.5 566.3 0 0 0 626.5 633.9M635.5 607.8A294.3 526.7 0 0 0 651 632.4M660.8 607.2A271.3 485.5 0 0 0 677 630.6M1057 600.6A304.6 545.1 0 0 0 1064 587.3M886 298L888.4 295.3L890.9 292.6L893.3 289.7L895.7 286.9L898.1 283.9L900.6 280.9L903 277.7M940 362.5L948 353M984 322L990.5 304M704.5 283.5L709.5 296"/>
<path fill="none" stroke="#22c060" stroke-width="1.3" d="M604.2 606.7A322.6 577.4 0 0 0 619.2 633.3M605.2 607.5A322.1 576.4 0 0 0 621.2 635.6M673.2 609.2A261.5 468 0 0 0 687 627.9M966.6 617.6A237.8 425.5 0 0 0 984.8 594.6M855 325.3L857.8 323.7L860.5 321.9L863.2 320L866 317.9M868 315.1L870.7 312.8L873.3 310.5L876 308.1L878.7 305.5L881.3 302.9L884 300.1M893 290.1L895.2 287.4L897.5 284.7L899.8 281.9L902 279M914 263.8L916.6 260.1L919.2 256.3L921.8 252.4L924.4 248.5L927 244.5M915 263.4L917.5 259.8L920 256.1L922.5 252.4L925 248.6L927.5 244.7M899 352.5L903.5 348.5"/>
<path fill="none" stroke="#30e030" stroke-width="1.6" d="M854 325.1L856.5 323.7L859 322.2L861.5 320.5L864 318.8M913 264.2L915.6 260.5L918.2 256.8L920.8 252.9L923.4 249L926 245M924 382.5L931 374.5"/>
<path fill="none" stroke="#e0e820" stroke-width="1.5" d="M855 323.9L857.3 322.5L859.7 321.1L862 319.5M925 383.3L930 377.5"/>
<path fill="none" stroke="#8040c0" stroke-width="1" d="M758.5 389.5L761 392"/>
<path fill="none" stroke="#9040b0" stroke-width="1" d="M838 327.5L840.3 327.6L842.7 327.6L845 327.1"/>
<path fill="none" stroke="#d01030" stroke-width="0.9" stroke-dasharray="3 3.5" d="M781 600.3A274.7 491.6 0 0 0 854 610.5M734.6 211L737.5 222.5M738.6 227L745.2 243.9"/>
<path fill="none" stroke="#e01828" stroke-width="1.1" d="M259.8 637.7L260.3 639.4M353.5 559.2L354.2 561.4M1215.8 556.3L1216.5 554.2M1229.6 546.4L1230.2 544.3M1246.2 544.3L1246.8 542.7M1272.5 546.1L1273.2 543.6M1286.8 539.2L1287.2 537.7M1296.2 535.2L1296.8 533.4M1301.3 532.3L1302 529.9M563.8 604.2L564.3 605.3M563.8 602.7L564.3 603.9M567.2 596.7L567.7 597.6M574 600L574.7 601.5M574.5 599.8L575.1 601.1M576.2 602.3L577 603.9M582.8 603.9L583.3 605M583.5 604.2L584.1 605.5M587.5 604.2L588.2 605.6M589 605.5L589.4 606.3M595 607.1L595.5 608.1M595.8 606.9L596.2 607.8M599 606.2L599.6 607.4M603.8 607.6L604.3 608.6M604.2 606.7L604.7 607.6M609 606.3L609.6 607.3M608.5 603.6L609 604.4M613.2 606.3L613.7 607.2M619.5 608.8L620.2 610M624.2 608.3L625 609.7M624.8 607.7L625.2 608.4M628.5 606.4L629.3 607.7M630.2 608.3L630.7 609.1M633.5 606.1L634.3 607.5M639.8 607.1L640.4 608.3M641 608.3L641.6 609.2M640.5 606.3L640.9 607M645.8 608L646.2 608.9M649.5 608.8L650.2 609.9M649.8 607.8L650.2 608.6M653.8 606L654.5 607.2M661 609.2L661.7 610.3M666.2 608.4L666.8 609.2M667 608.1L667.7 609.1M673.2 609.2L673.9 610.2M678.8 610.7L679.4 611.7M678 609L678.4 609.6M684.2 610.2L684.7 610.8M731.2 572.8L736 576.8M695.5 539.7L703.5 549.5M637.2 455.9L639.8 459.5"/>
<path fill="none" stroke="#d01830" stroke-width="1" d="M690 607.5A296.9 531.2 0 0 0 693.6 611.2M696.7 605.5A292.6 523.7 0 0 0 701.1 609.9M696.7 606.6A293.2 524.6 0 0 0 701.1 611M704.1 607.5A290.1 519 0 0 0 708.5 611.5M712.1 606.6A286 511.8 0 0 0 716.6 610.5M721.2 607.4A282.5 505.5 0 0 0 725.3 610.6M721.2 608.4A283 506.5 0 0 0 725.3 611.7M728.4 609A280.4 501.8 0 0 0 732 611.7M742.5 608.5A274.9 492 0 0 0 747 611.5M751.9 608.3A271.7 486.1 0 0 0 756.3 610.9M765.4 611A269.1 481.6 0 0 0 768.9 612.7M772.1 611A267.3 478.4 0 0 0 776.6 612.9M780.9 610.8A265.2 474.5 0 0 0 785.4 612.5M789.7 610.7A263.3 471.2 0 0 0 794 612M781.5 300.7L783.5 302.7M786.5 305.5L788 306.9M798 314.6L801 316.6M803 317.8L806 319.4M811 321.8L812.5 322.4M829 326.8L832 327.2M846 326.9L848.3 326.1L850.7 325.1L853 324M853 323.7L855.2 322.5L857.5 321.2L859.8 319.8L862 318.3M864 316.9L866 315.3L868 313.8M870 312.1L872 310.4L874 308.6M876.5 306.3L879 303.9M881 301.9L884 298.8M886 296.7L889 293.4M892 289.9L895 286.4M897 284L899.5 280.9M902 277.7L904.5 274.5M906 272.5L908 269.8M910 267.1L913 262.9M915 260.1L918 255.8M919.5 253.6L922 249.8M988 309L991.2 299.5M709 295L715.3 310.6M943.4 209L941.8 215.4M598 363L600.5 369.5M1081.6 349L1081 351.3"/>
<path fill="none" stroke="#4a9aec" stroke-width="5.2" stroke-dasharray="7 1.5" d="M776 616.3L779 616.3L782 616.3L785 616.2L788 616.2L791 616.2L794 616.1L797 616.1L800 616.1L803 616L806 616L809 615.9L812 615.9L815 615.9L818 615.8L821 615.8L824 615.8L827 615.7L830 615.7L833 615.7L836 615.6L839 615.6L842 615.6L845 615.5L848 615.6L851 615.5L854 615.4L857 615.3L860 615.1L863 614.9L866 614.6L869 614.4L872 614L875 613.7L878 613.3L881 612.9L884 612.4L887 612L890 611.5L893 610.9L896 610.4L899 609.8L902 609.2L905 608.6L908 607.9L911 607.2L914 606.5L917 605.8L920 605.1L923 604.3L926 603.6"/>
<path fill="none" stroke="#7ab2f2" stroke-width="2.0" stroke-dasharray="9 4 5 6" d="M800 619.7L803 619.6L806 619.6L809 619.5L812 619.5L815 619.5L818 619.4L821 619.4L824 619.4L827 619.3L830 619.3L833 619.3L836 619.2L839 619.2L842 619.2L845 619.1L848 619.2L851 619.1L854 619L857 618.9L860 618.7L863 618.5L866 618.2L869 618L872 617.6L875 617.3L878 616.9L881 616.5L884 616L887 615.6L890 615.1L893 614.5L896 614L899 613.4L902 612.8L905 612.2"/>
<path fill="none" stroke="#7ab2f2" stroke-width="1.2" stroke-dasharray="12 9 6 14" d="M812 622.5L815 622.5L818 622.4L821 622.4L824 622.4L827 622.3L830 622.3L833 622.3L836 622.2L839 622.2L842 622.2L845 622.1L848 622.2L851 622.1L854 622L857 621.9L860 621.7L863 621.5L866 621.2L869 621L872 620.6L875 620.3L878 619.9L881 619.5L884 619L887 618.6L890 618.1L893 617.5L896 617L899 616.4"/>
<path fill="none" stroke="#4a9aec" stroke-width="5.0" stroke-dasharray="9 1.5 6 1" d="M862 610L865 609.7L868 609.5L871 609.1L874 608.8L877 608.4L880 608L883 607.6L886 607.1L889 606.6L892 606.1L895 605.6L898 605L901 604.4L904 603.8"/>
<path fill="none" stroke="#5aa3ef" stroke-width="1.6" stroke-dasharray="10 4 7 3" d="M880 605.1L883 604.7L886 604.2L889 603.7L892 603.2L895 602.7L898 602.1L901 601.5L904 600.9L907 600.2L910 599.6L913 598.9L916 598.2L919 597.4L922 596.7"/>
<path d="M906 608.5L912 606.5V615L906 617Z M921 609.5L927 607.5V613.5L921 615.5Z" fill="#78b0f2"/>
<path fill="none" stroke="#22b888" stroke-width="2.6" stroke-dasharray="11 2" d="M780 614.9L783 614.9L786 614.8L789 614.8L792 614.8L795 614.7L798 614.7L801 614.6L804 614.6L807 614.6L810 614.5L813 614.5L816 614.5L819 614.4L822 614.4L825 614.4L828 614.3L831 614.3L834 614.2L837 614.2L840 614.2L843 614.1L846 614.2L849 614.2L852 614.1L855 614L858 613.8L861 613.6L864 613.4L867 613.1L870 612.9L873 612.5L876 612.2L879 611.8L882 611.3L885 610.9L888 610.4L891 609.9L894 609.4L897 608.8L900 608.2L903 607.6L906 606.9L909 606.3L912 605.6L915 604.9L918 604.2"/>
<path fill="none" stroke="#38e038" stroke-width="2.2" stroke-dasharray="13 2.5" d="M796 614.3L799 614.3L802 614.2L805 614.2L808 614.2L811 614.1L814 614.1L817 614.1L820 614L823 614L826 613.9L829 613.9L832 613.9L835 613.8L838 613.8L841 613.8L844 613.7L847 613.8L850 613.7L853 613.7L856 613.5L859 613.4L862 613.2L865 612.9L868 612.7L871 612.3L874 612L877 611.6L880 611.2L883 610.8L886 610.3L889 609.8L892 609.3L895 608.8L898 608.2L901 607.6"/>
<path fill="none" stroke="#d8e820" stroke-width="1.8" stroke-dasharray="17 2" d="M813 613.7L816 613.7L819 613.6L822 613.6L825 613.6L828 613.5L831 613.5L834 613.4L837 613.4L840 613.4L843 613.3L846 613.4L849 613.4L852 613.3L855 613.2L858 613L861 612.8L864 612.6L867 612.3L870 612.1L873 611.7L876 611.4"/>
<path fill="none" stroke="#e08020" stroke-width="1.4" stroke-dasharray="10 2" d="M828 612.1L831 612.1L834 612L837 612L840 612L843 611.9L846 612L849 612"/>
<path fill="none" stroke="#b02040" stroke-width="1.5" d="M831 611.3L834 611.2L837 611.2"/>
<path fill="none" stroke="#e01020" stroke-width="1.3" d="M849.5 611.2L852.5 611.1"/>
<rect x="831" y="615" width="8" height="8.6" fill="#6aa8f0"/>
<path d="M833 626.2H843" stroke="#5aa3ef" stroke-width="1" fill="none"/>
<rect x="855.3" y="329.5" width="6.6" height="17.5" fill="#5a9fee"/>
<path d="M855.5 348.5H862M855.5 350.5H862" stroke="#6aa8f0" stroke-width="0.9" fill="none"/>
</g>
<rect x="135.5" y="119.5" width="1405" height="530" fill="none" stroke="#757575" stroke-width="1"/>
<g fill="#666666" font-size="18px" letter-spacing="0.4">
<g text-anchor="end">
<text x="122.9" y="129.5">0</text>
<text x="122.9" y="176.1">5</text>
<text x="122.9" y="222.6">10</text>
<text x="122.9" y="269.2">15</text>
<text x="122.9" y="315.8">20</text>
<text x="122.9" y="362.3">25</text>
<text x="122.9" y="408.9">30</text>
<text x="122.9" y="455.5">35</text>
<text x="122.9" y="502.1">40</text>
<text x="122.9" y="548.6">45</text>
<text x="122.9" y="595.2">50</text>
<text x="122.9" y="641.8">55</text>
</g><g text-anchor="middle">
<text x="214.2" y="680">-120</text>
<text x="318.3" y="680">-100</text>
<text x="422.4" y="680">-80</text>
<text x="526.5" y="680">-60</text>
<text x="630.7" y="680">-40</text>
<text x="734.8" y="680">-20</text>
<text x="838.9" y="680">0</text>
<text x="943" y="680">20</text>
<text x="1047" y="680">40</text>
<text x="1151.2" y="680">60</text>
<text x="1255.2" y="680">80</text>
<text x="1359.4" y="680">100</text>
<text x="1463.5" y="680">120</text>
</g>
<text x="838" y="709.8" text-anchor="middle" font-size="17.8px" letter-spacing="0.13">Across Track (m)</text>
<text transform="translate(31.4 382.6) rotate(-90)" text-anchor="middle" font-size="17.8px" letter-spacing="0.62">Depth (m) (unrefracted)</text>
</g>
</svg>
</div>
<div class="status">Across -134.58  Depth 62.70</div>
</body>
</html>
